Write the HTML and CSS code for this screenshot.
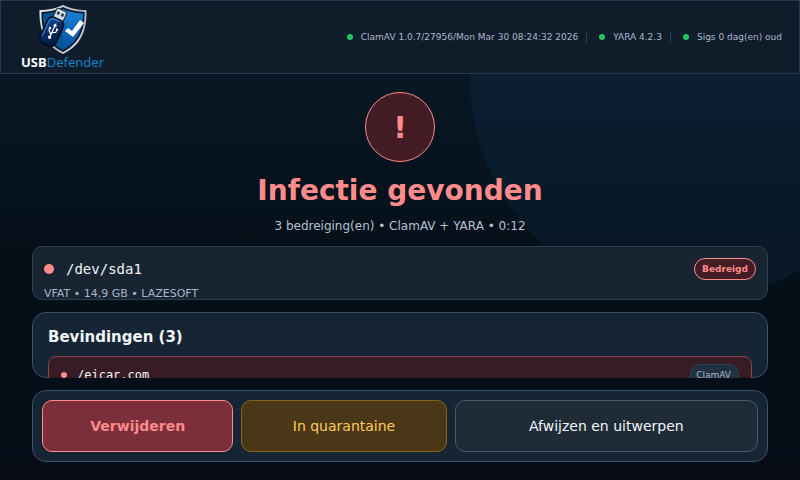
FILE: index.html
```html
<!DOCTYPE html>
<html lang="nl">
<head>
<meta charset="utf-8">
<meta name="viewport" content="width=device-width, initial-scale=1">
<title>USBDefender</title>
<link rel="stylesheet" href="styles.css">
</head>
<body>
<div class="app">
  <header class="topbar">
    <div class="brand">
      <svg class="brand-mark" viewBox="0 0 50 50" aria-hidden="true">
        <defs>
          <linearGradient id="rim" x1="0" y1="0" x2="1" y2="1">
            <stop offset="0" stop-color="#f4f7fa"/>
            <stop offset="0.5" stop-color="#a3afbc"/>
            <stop offset="1" stop-color="#e6ebf0"/>
          </linearGradient>
          <linearGradient id="blue" x1="0" y1="0" x2="0" y2="1">
            <stop offset="0" stop-color="#1a83d6"/>
            <stop offset="1" stop-color="#0550a0"/>
          </linearGradient>
          <linearGradient id="stick" x1="0" y1="0" x2="1" y2="1">
            <stop offset="0" stop-color="#14529c"/>
            <stop offset="0.5" stop-color="#082a62"/>
            <stop offset="1" stop-color="#03132f"/>
          </linearGradient>
        </defs>
        <path d="M25 1C19 4 10 6 1.500 6C1 25 6 41 25 50C44 41 49 25 48.500 6C40 6 31 4 25 1Z" fill="url(#rim)"/>
        <path d="M25 3C19 6 12 7.500 3.500 8C3 25 8 39 25 48C42 39 47 25 46.500 8C38 7.500 31 6 25 3Z" fill="#07172d"/>
        <path d="M25 5C20 7.500 13 9 5 9.500C5 25 10 38 25 46Z" fill="#07548f"/>
        <path d="M25 5C30 7.500 37 9 45 9.500C45 25 40 38 25 46Z" fill="url(#blue)"/>
        <path d="M27 27L30 24L34 27L42 16L46 19L35 33Z" fill="#fff"/>
        <g transform="rotate(25 15 26)">
          <rect x="9.500" y="4" width="11" height="13" rx="1.500" fill="#d5dce4" stroke="#17253b"/>
          <rect x="11.500" y="7" width="2.500" height="3" fill="#233149"/>
          <rect x="16" y="7" width="2.500" height="3" fill="#233149"/>
          <rect x="6" y="14" width="17" height="28" rx="5" fill="url(#stick)" stroke="#020d20" stroke-width="1.500"/>
          <path d="M7.500 36V20Q7.500 15.500 12 15.500H18" fill="none" stroke="#3b93dd"/>
          <path d="M15 21V34M15 31L11.500 28V25M15 29L18.500 27V24" fill="none" stroke="#fff" stroke-width="1.200"/>
          <path d="M15 18.500L17 22H13Z" fill="#fff"/>
          <circle cx="15" cy="34" r="1.700" fill="#fff"/>
          <circle cx="11.500" cy="25.500" r="1.200" fill="#fff"/>
          <path d="M17.500 23h2v2h-2z" fill="#fff"/>
        </g>
      </svg>
      <div class="brand-name"><b>USB</b><span>Defender</span></div>
    </div>
    <ul class="engines">
      <li><i class="dot"></i>ClamAV 1.0.7/27956/Mon Mar 30 08:24:32 2026</li>
      <li><i class="dot"></i>YARA 4.2.3</li>
      <li><i class="dot"></i>Sigs 0 dag(en) oud</li>
    </ul>
  </header>

  <main class="content">
    <section class="result">
      <div class="alert-icon">!</div>
      <h1>Infectie gevonden</h1>
      <p>3 bedreiging(en) • ClamAV + YARA • 0:12</p>
    </section>

    <section class="device">
      <div class="device-row">
        <i class="dot dot-device"></i>
        <span class="device-path">/dev/sda1</span>
        <span class="badge">Bedreigd</span>
      </div>
      <p class="device-info">VFAT • 14,9 GB • LAZESOFT</p>
    </section>

    <section class="findings">
      <h2>Bevindingen (3)</h2>
      <div class="finding">
        <i class="dot dot-threat"></i>
        <span class="finding-path">/eicar.com</span>
        <span class="engine-tag">ClamAV</span>
      </div>
    </section>

    <div class="actions">
      <button class="btn btn-delete" type="button">Verwijderen</button>
      <button class="btn btn-quarantine" type="button">In quarantaine</button>
      <button class="btn btn-eject" type="button">Afwijzen en uitwerpen</button>
    </div>
  </main>
</div>
</body>
</html>
```
FILE: styles.css
```css
* {
  box-sizing: border-box;
}

body {
  margin: 0;
  font-family: "DejaVu Sans", sans-serif;
  color: #f1f5f9;
  background: #050d16;
}

h1, h2, p, ul {
  margin: 0;
  padding: 0;
}

.app {
  position: relative;
  display: flex;
  flex-direction: column;
  height: 100vh;
  overflow: hidden;
  background: linear-gradient(#091b29, #050f18 55%, #050f18 75%, #080d18);
}

/* Large tinted disc behind the content */
.app::before {
  content: "";
  position: absolute;
  top: -140px;
  right: -110px;
  width: 440px;
  height: 440px;
  border-radius: 50%;
  background: rgba(22, 58, 96, 0.2);
}

.topbar {
  position: relative;
  display: flex;
  align-items: center;
  justify-content: space-between;
  flex: none;
  height: 74px;
  padding: 0 17px 0 20px;
  border: 1px solid #233a4c;
  background: #111c2b;
}

.brand {
  display: flex;
  flex-direction: column;
  align-items: center;
}

.brand-mark {
  width: 50px;
  height: 50px;
}

.brand-name {
  font: 13px/16px "Noto Sans", sans-serif;
  color: #1582cb;
}

.brand-name b {
  color: #fff;
}

.engines {
  display: flex;
  list-style: none;
  font-size: 9px;
  line-height: 12px;
  color: #a9b7c8;
}

.engines li {
  display: flex;
  align-items: center;
  gap: 8px;
}

.engines li + li {
  margin-left: 8px;
  padding-left: 12px;
  border-left: 1px solid #2a4053;
}

.dot {
  flex: none;
  width: 6px;
  height: 6px;
  border-radius: 50%;
  background: #22c55e;
}

.content {
  position: relative;
  display: flex;
  flex-direction: column;
  flex: 1;
  min-height: 0;
  gap: 12px;
  padding: 18px 32px;
}

.result {
  display: flex;
  flex-direction: column;
  align-items: center;
  flex: none;
  color: #ff8b8b;
}

.alert-icon {
  display: grid;
  place-items: center;
  width: 70px;
  height: 70px;
  border: 1px solid #ff8b8b;
  border-radius: 50%;
  background: #431c26;
  font-size: 30px;
  font-weight: bold;
}

.result h1 {
  margin-top: 11px;
  font-size: 28px;
  line-height: 36px;
}

.result p {
  margin-top: 10px;
  font-size: 12px;
  line-height: 15px;
  color: #b4c2d2;
}

.device {
  flex: none;
  height: 54px;
  padding: 11px;
  overflow: hidden;
  border: 1px solid #29404f;
  border-radius: 10px;
  background: #182432;
}

.device-row {
  display: flex;
  align-items: center;
  gap: 12px;
}

.dot-device {
  width: 10px;
  height: 10px;
  background: #ff8b8b;
}

.device-path {
  flex: 1;
  font: 14px/20px "DejaVu Sans Mono", monospace;
}

.badge {
  padding: 0 7px;
  border: 1px solid #ff8b8b;
  border-radius: 11px;
  background: #431c26;
  color: #ff8b8b;
  font-size: 9px;
  font-weight: bold;
  line-height: 20px;
}

.device-info {
  margin-top: 7px;
  font-size: 11px;
  line-height: 14px;
  color: #a9b7c8;
}

.findings {
  flex: 1;
  min-height: 0;
  padding: 15px 15px 0;
  overflow: clip;
  overflow-clip-margin: border-box;
  border: 1px solid #38536f;
  border-radius: 14px;
  background: #162533;
}

.findings h2 {
  font-size: 15px;
  line-height: 18px;
}

.finding {
  display: flex;
  align-items: center;
  gap: 10px;
  margin-top: 10px;
  padding: 7px 12px;
  border: 1px solid #864651;
  border-radius: 8px;
  background: #381c25;
}

.dot-threat {
  background: #ff8b8b;
}

.finding-path {
  flex: 1;
  font: 12px/16px "DejaVu Sans Mono", monospace;
}

.engine-tag {
  padding: 0 7px 0 5px;
  border: 1px solid #2a4053;
  border-radius: 10px;
  background: #203140;
  color: #a9b7c8;
  font-size: 9px;
  line-height: 20px;
}

.actions {
  display: flex;
  gap: 8px;
  flex: none;
  padding: 9px;
  border: 1px solid #38536f;
  border-radius: 14px;
  background: #162533;
}

.btn {
  height: 52px;
  padding: 0;
  border: 1px solid;
  border-radius: 10px;
  font-family: inherit;
  font-size: 14px;
}

.btn-delete {
  flex: 191 1 0;
  border-color: #ff8b8b;
  background: #7c2e3b;
  color: #ff8b8b;
  font-weight: bold;
}

.btn-quarantine {
  flex: 205 1 0;
  border-color: #8a6519;
  background: #4a3718;
  color: #ffca55;
}

.btn-eject {
  flex: 304 1 0;
  border-color: #475b6e;
  background: #1f2b37;
  color: #f1f5f9;
}
```
